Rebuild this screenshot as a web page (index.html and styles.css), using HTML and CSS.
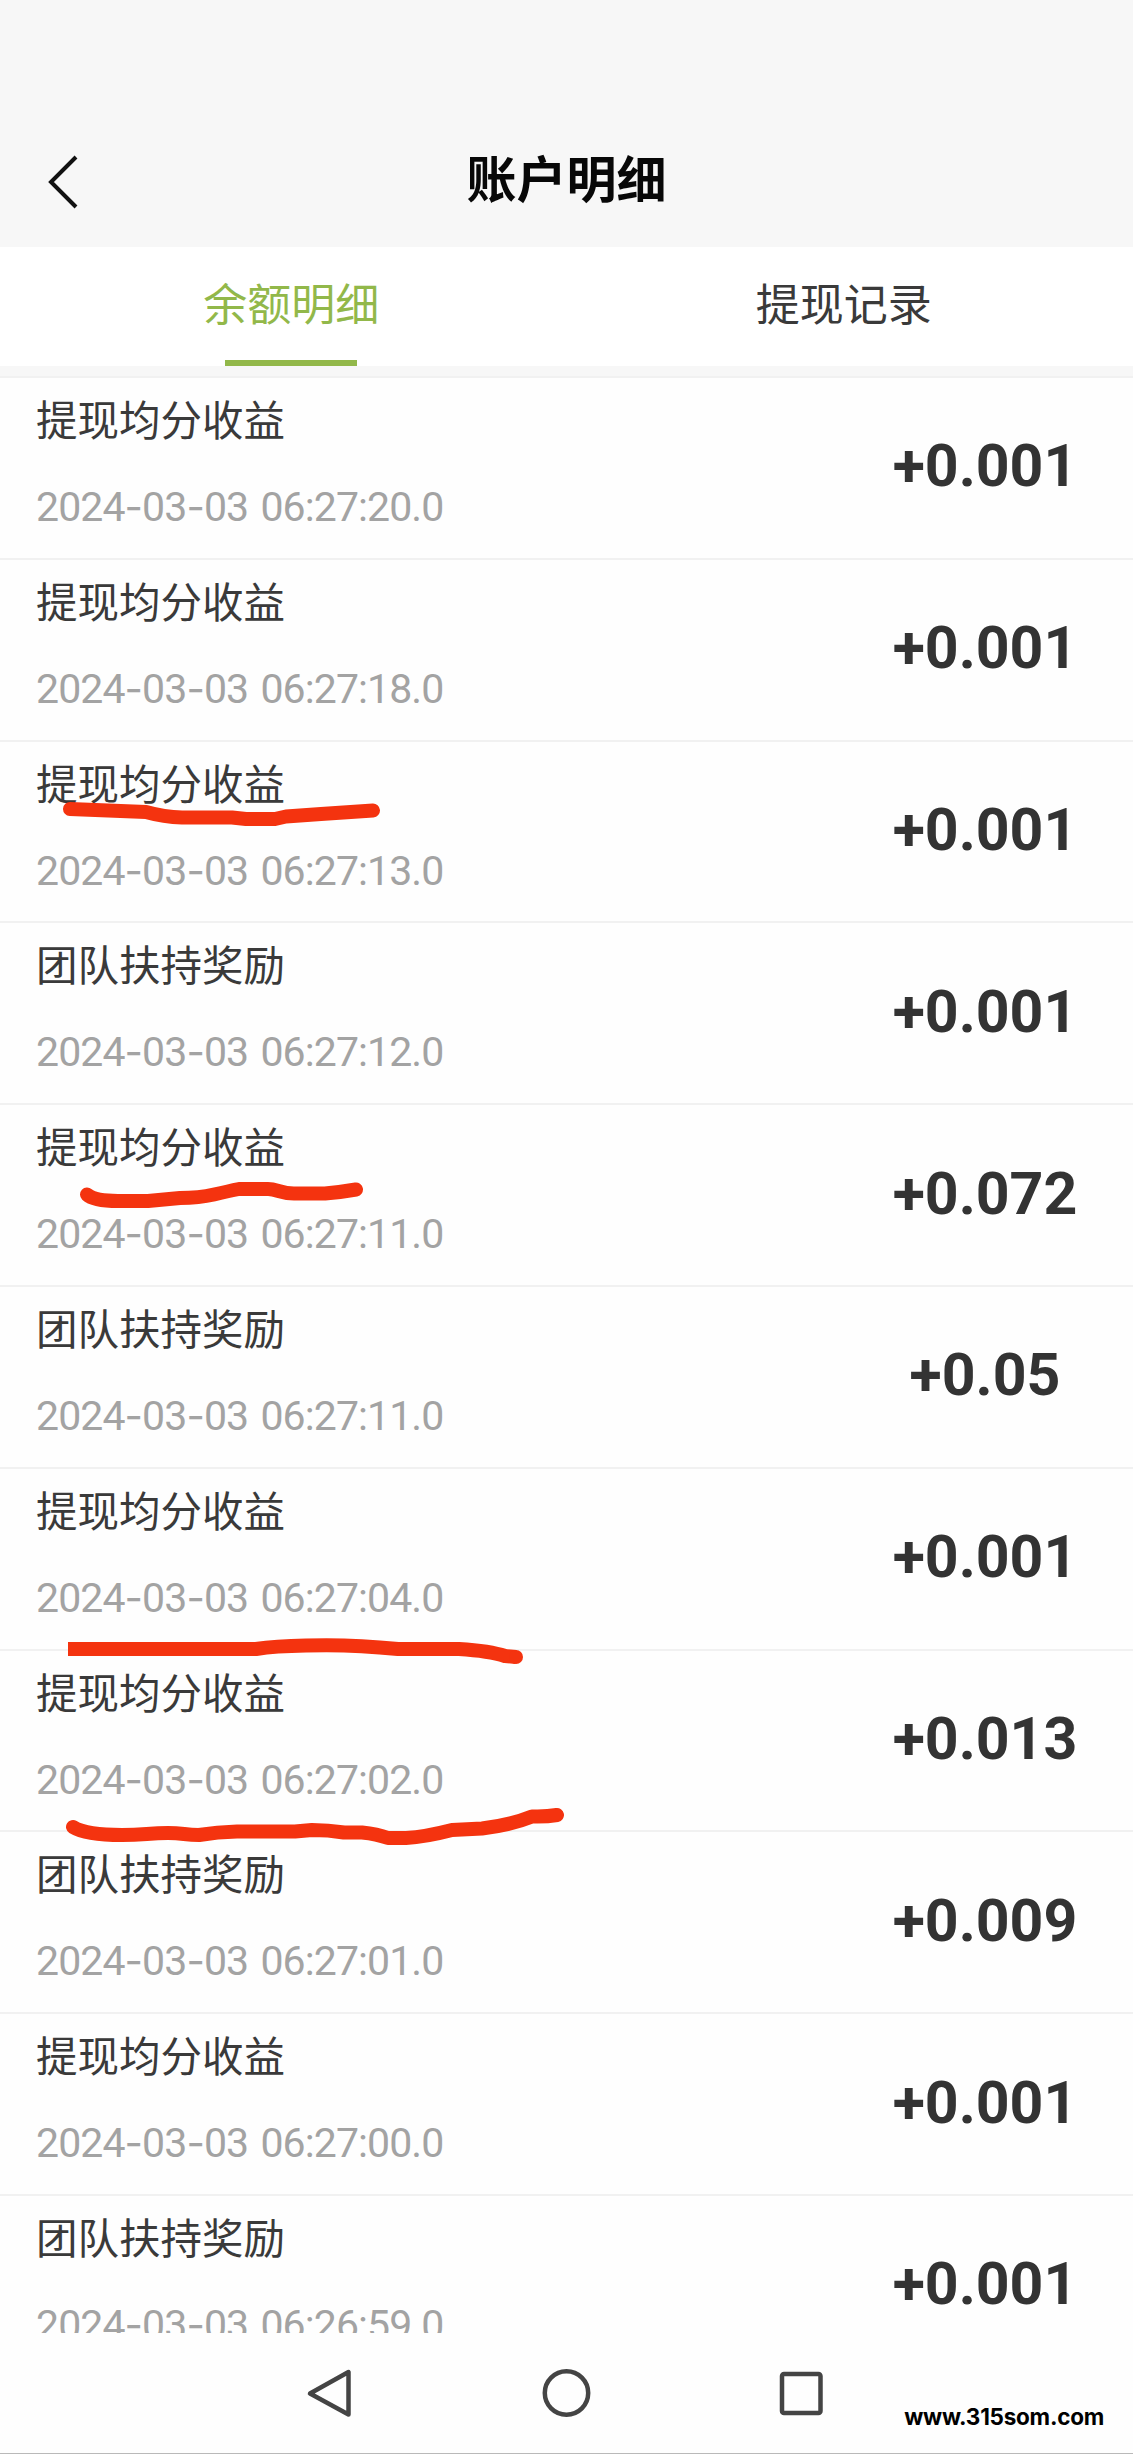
FILE: index.html
```html
<!DOCTYPE html>
<html lang="zh-CN">
<head>
<meta charset="utf-8">
<title>账户明细</title>
<link rel="stylesheet" href="styles.css">
</head>
<body>
<div class="screen">
  <header class="header">
    <svg class="back" viewBox="0 0 32 56" fill="none" stroke="#111" stroke-width="4"><path d="M29 3 4 28 29 53"/></svg>
    <h1 class="title">账户明细</h1>
  </header>
  <nav class="tabs">
    <a class="tab tab-active">余额明细</a>
    <a class="tab">提现记录</a>
  </nav>
  <ul class="list">
    <li class="row"><div class="info"><span class="name">提现均分收益</span><span class="time">2024<i>-</i>03<i>-</i>03 06:27:20.0</span></div><b class="amount">+0.001</b></li>
    <li class="row"><div class="info"><span class="name">提现均分收益</span><span class="time">2024<i>-</i>03<i>-</i>03 06:27:18.0</span></div><b class="amount">+0.001</b></li>
    <li class="row"><div class="info"><span class="name">提现均分收益</span><span class="time">2024<i>-</i>03<i>-</i>03 06:27:13.0</span></div><b class="amount">+0.001</b></li>
    <li class="row"><div class="info"><span class="name">团队扶持奖励</span><span class="time">2024<i>-</i>03<i>-</i>03 06:27:12.0</span></div><b class="amount">+0.001</b></li>
    <li class="row"><div class="info"><span class="name">提现均分收益</span><span class="time">2024<i>-</i>03<i>-</i>03 06:27:11.0</span></div><b class="amount">+0.072</b></li>
    <li class="row"><div class="info"><span class="name">团队扶持奖励</span><span class="time">2024<i>-</i>03<i>-</i>03 06:27:11.0</span></div><b class="amount">+0.05</b></li>
    <li class="row"><div class="info"><span class="name">提现均分收益</span><span class="time">2024<i>-</i>03<i>-</i>03 06:27:04.0</span></div><b class="amount">+0.001</b></li>
    <li class="row"><div class="info"><span class="name">提现均分收益</span><span class="time">2024<i>-</i>03<i>-</i>03 06:27:02.0</span></div><b class="amount">+0.013</b></li>
    <li class="row"><div class="info"><span class="name">团队扶持奖励</span><span class="time">2024<i>-</i>03<i>-</i>03 06:27:01.0</span></div><b class="amount">+0.009</b></li>
    <li class="row"><div class="info"><span class="name">提现均分收益</span><span class="time">2024<i>-</i>03<i>-</i>03 06:27:00.0</span></div><b class="amount">+0.001</b></li>
    <li class="row"><div class="info"><span class="name">团队扶持奖励</span><span class="time">2024<i>-</i>03<i>-</i>03 06:26:59.0</span></div><b class="amount">+0.001</b></li>
  </ul>
  <footer class="system-nav">
    <svg class="key" viewBox="0 0 52 52"><path d="M43.500 5v42.500L5 26.500z"/></svg>
    <svg class="key" viewBox="0 0 52 52"><circle cx="25.500" cy="26" r="21.700"/></svg>
    <svg class="key" viewBox="0 0 52 52"><rect x="5" y="7" width="38.500" height="39" rx="2"/></svg>
  </footer>
  <svg class="marks" viewBox="0 0 1133 2454">
    <path d="M70 809 L146 812 Q164 817 182 817.500 H232 L246 819 H275 L286 816.500 L321 814 L373 810.500"/>
    <path d="M87 1194.500 Q94 1201 118 1201 H148 L180 1198 Q199 1198 214 1194.500 T239 1189 H268 C277 1189 281 1193.500 294 1193.500 H325 Q342 1192 356 1189.500"/>
    <path class="flat" d="M68 1649 H256 Q275 1646 306 1645.500 Q350 1644 398 1649 H459 Q490 1651 505 1656 L516 1657"/>
    <circle cx="516" cy="1657" r="7"/>
    <path d="M73 1827 Q86 1835 122 1835 C145 1835 148 1833 168 1833 C184 1833 184 1835 199 1835 Q217 1832 237 1831.500 H295 L312 1830 Q328 1830 344 1832.500 H362 Q377 1834 388 1838 H406 Q425 1837 452 1830 L482 1828.500 Q511 1825 532 1816.500 Q546 1817 557 1815"/>
  </svg>
  <span class="site">www.315som.com</span>
</div>
</body>
</html>
```
FILE: styles.css
```css
* { box-sizing: border-box; }
body {
  margin: 0;
  background: #fefefe;
  font-family: "Noto Sans CJK SC", sans-serif;
  color: #3a3a3a;
}
.screen {
  position: relative;
  display: flex;
  flex-direction: column;
  width: 1133px;
  height: 2454px;
  overflow: hidden;
}
.header {
  display: grid;
  grid-template-columns: 1fr auto 1fr;
  align-items: center;
  height: 247px;
  padding: 112px 47px 0;
  background: #f7f7f7;
}
.back { width: 32px; height: 56px; margin-top: 5px; }
.title {
  margin: 0 0 8px;
  font-size: 50px;
  line-height: 60px;
  font-weight: 700;
  color: #080808;
}
.tabs {
  display: flex;
  height: 129px;
  padding: 0 13px 0 15px;
  background: #fff;
  border-bottom: 10px solid #f7f7f7;
}
.tab {
  display: flex;
  flex: 1;
  flex-direction: column;
  align-items: center;
  justify-content: space-between;
  padding-top: 23px;
  font-size: 44px;
  line-height: 64px;
}
.tab-active { color: #92b84a; }
.tab-active::after {
  content: "";
  width: 132px;
  height: 6px;
  background: #92b84a;
}
.list {
  flex: 1;
  min-height: 0;
  margin: 0;
  padding: 0;
  overflow: hidden;
  list-style: none;
}
.row {
  display: flex;
  justify-content: space-between;
  height: 181.800px;
  padding: 0 38px 0 36px;
  border-top: 2px solid #f1f1f1;
}
.info { display: flex; flex-direction: column; padding-top: 10px; }
.name { font-size: 41.500px; line-height: 60px; }
.time {
  margin-top: 29px;
  font-family: Roboto, sans-serif;
  font-size: 41px;
  line-height: 60px;
  letter-spacing: -0.900px;
  word-spacing: 3px;
  color: #a3a3a3;
  white-space: nowrap;
}
.time i { font-family: Inter, sans-serif; font-style: normal; font-size: 40px; line-height: 1; }
.amount {
  align-self: center;
  width: 220px;
  margin-bottom: 3px;
  font-family: Roboto, sans-serif;
  font-size: 59px;
  line-height: 70px;
  text-align: center;
  color: #333;
}
.system-nav {
  display: flex;
  justify-content: center;
  gap: 184px;
  height: 121px;
  padding-top: 34px;
  border-bottom: 1px solid #b9b9b9;
}
.key {
  width: 52px;
  height: 52px;
  fill: none;
  stroke: #444;
  stroke-width: 4.500;
  stroke-linejoin: round;
}
.marks {
  position: absolute;
  inset: 0;
  width: 1133px;
  height: 2454px;
  fill: none;
  stroke: #f4330f;
  stroke-width: 14;
  stroke-linecap: round;
  stroke-linejoin: round;
}
.marks .flat { stroke-linecap: butt; }
.marks circle { fill: #f4330f; stroke: none; }
.site {
  position: absolute;
  right: 29px;
  bottom: 23px;
  font-family: Inter, sans-serif;
  font-size: 22.500px;
  line-height: 28px;
  font-weight: 700;
  letter-spacing: -0.250px;
  color: #000;
}
```
